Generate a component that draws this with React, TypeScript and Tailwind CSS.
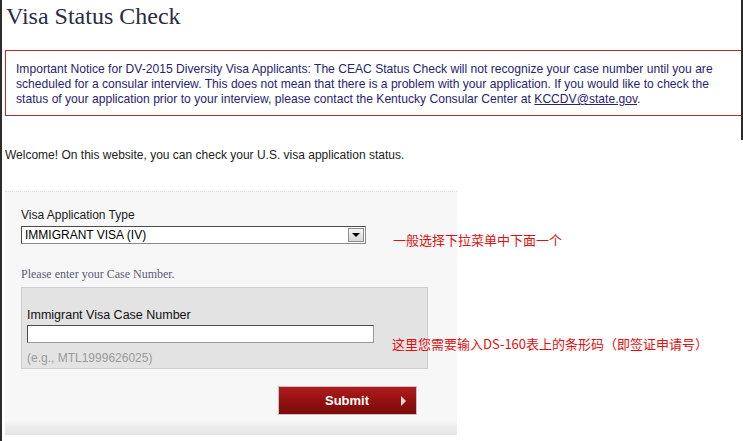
import React from "react";

const sans = "font-['Liberation_Sans',Arial,sans-serif]";
const serif = "font-['Liberation_Serif','Times_New_Roman',serif]";
const cjk = "font-['Noto_Sans_CJK_SC','Noto_Sans_CJK_TC',sans-serif]";

function SelectBox() {
  return (
    <div className="mt-[3px] flex h-[18px] w-[345px] items-center justify-between border border-[#4a4a4a] border-b-[#8a8a8a] border-r-[#8a8a8a] bg-white pl-[3px] pr-[1px]">
      <span className="text-[12px] leading-none text-black">IMMIGRANT VISA (IV)</span>
      <span className="flex h-[14px] w-[16px] items-center justify-center border border-[#8c8c8c] bg-gradient-to-b from-[#f4f4f4] to-[#d9d9d9]">
        <span className="h-0 w-0 border-x-[4px] border-t-[4px] border-x-transparent border-t-black" />
      </span>
    </div>
  );
}

function SubmitButton() {
  return (
    <button
      type="button"
      className="ml-[273px] mt-[17px] flex h-[29px] w-[139px] items-center border border-[#c4c4c4] p-0"
    >
      <span className="relative flex h-full w-full items-center bg-gradient-to-b from-[#b01c1c] via-[#951010] to-[#7b0a0a]">
        <span className="ml-[46px] text-[13px] font-bold leading-none text-white">Submit</span>
        <span className="absolute right-[10px] top-[9px] h-0 w-0 border-y-[5px] border-l-[5px] border-y-transparent border-l-[#f3d7d7]" />
      </span>
    </button>
  );
}

export default function App() {
  return (
    <div className={`relative h-[441px] w-[743px] overflow-hidden border-l-2 border-[#2c2c2c] bg-white ${sans}`}>
      <div className="h-[140px] border-r-2 border-[#2c2c2c]">
        <h1 className={`ml-[4px] pt-[1px] text-[24px] leading-[30px] text-[#2b2b45] ${serif}`}>
          Visa Status Check
        </h1>
        <div className="ml-[3px] mt-[19px] border border-[#b92a2a] border-r-0 pb-[8px] pl-[10px] pt-[11px] text-[12.1px] leading-[15px] text-[#2a2370] whitespace-nowrap">
          Important Notice for DV-2015 Diversity Visa Applicants: The CEAC Status Check will not recognize your case number until you are
          <br />
          scheduled for a consular interview. This does not mean that there is a problem with your application. If you would like to check the
          <br />
          status of your application prior to your interview, please contact the Kentucky Consular Center at{" "}
          <span className="underline">KCCDV@state.gov</span>.
        </div>
      </div>

      <p className="ml-[3px] mt-[8px] text-[12px] leading-[15px] text-[#222]">
        Welcome! On this website, you can check your U.S. visa application status.
      </p>

      <div className="ml-[3px] mt-[28px] flex h-[244px] w-[452px] flex-col border-t border-dotted border-[#dcdcdc] bg-[#f7f7f7]">
        <div className="pl-[16px]">
          <div className="mt-[16px] text-[12px] leading-[15px] text-[#1a1a1a]">Visa Application Type</div>
          <SelectBox />
          <div className={`mt-[23px] text-[12px] leading-[15px] text-[#5c5a76] ${serif}`}>
            Please enter your Case Number.
          </div>
          <div className="mt-[5px] h-[82px] w-[407px] border border-[#cdcdcd] bg-[#e3e3e3] pl-[5px]">
            <div className="mt-[20px] text-[12.5px] leading-[15px] text-[#111]">Immigrant Visa Case Number</div>
            <div className="mt-[2px] h-[18px] w-[347px] border border-[#4a4a4a] border-b-[#9a9a9a] border-r-[#9a9a9a] bg-white" />
            <div className="mt-[8px] text-[12px] leading-[15px] text-[#9a9a9a]">(e.g., MTL1999626025)</div>
          </div>
        </div>
        <SubmitButton />
        <div className="mt-auto h-[14px] bg-gradient-to-b from-[#f7f7f7] via-[#ebebeb] to-[#e4e4e4]" />
      </div>

      <div className={`absolute left-[391px] top-[231px] text-[13px] leading-[18px] text-[#e01010] whitespace-nowrap ${cjk}`}>
        一般选择下拉菜单中下面一个
      </div>
      <div className={`absolute left-[390px] top-[335px] text-[13px] leading-[18px] text-[#e01010] whitespace-nowrap ${cjk}`}>
        这里您需要输入DS-160表上的条形码（即签证申请号）
      </div>
    </div>
  );
}
